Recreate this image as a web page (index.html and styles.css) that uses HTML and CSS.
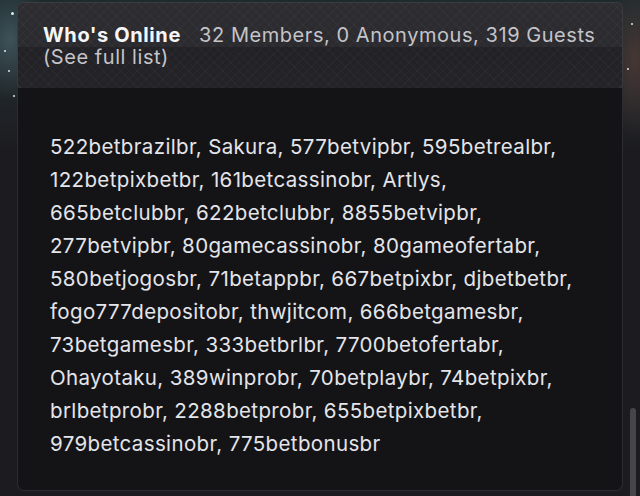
FILE: index.html
```html
<!DOCTYPE html>
<html lang="en">
<head>
    <meta charset="UTF-8">
    <meta name="viewport" content="width=device-width, initial-scale=1.0">
    <title>Who's Online</title>
    <link rel="stylesheet" href="styles.css">
</head>
<body>
    <div class="backdrop">
        <span class="star s1"></span>
        <span class="star s2"></span>
        <span class="star s3"></span>
        <span class="star s4"></span>
        <span class="star s5"></span>
        <span class="star s6"></span>
    </div>

    <div class="scrollbar"><div class="thumb"></div></div>

    <section class="online">
        <header class="online-head">
            <h3>Who's Online</h3>
            <span class="stats">32 Members, 0 Anonymous, 319 Guests</span>
            <a href="#" class="full-list">(See full list)</a>
        </header>
        <div class="online-body">
            <p class="members">522betbrazilbr, Sakura, 577betvipbr, 595betrealbr,<br>
            122betpixbetbr, 161betcassinobr, Artlys,<br>
            665betclubbr, 622betclubbr, 8855betvipbr,<br>
            277betvipbr, 80gamecassinobr, 80gameofertabr,<br>
            580betjogosbr, 71betappbr, 667betpixbr, djbetbetbr,<br>
            fogo777depositobr, thwjitcom, 666betgamesbr,<br>
            73betgamesbr, 333betbrlbr, 7700betofertabr,<br>
            Ohayotaku, 389winprobr, 70betplaybr, 74betpixbr,<br>
            brlbetprobr, 2288betprobr, 655betpixbetbr,<br>
            979betcassinobr, 775betbonusbr</p>
        </div>
    </section>
</body>
</html>
```

FILE: styles.css
```css
html, body {
    margin: 0;
    padding: 0;
}
body {
    width: 640px;
    height: 496px;
    overflow: hidden;
    position: relative;
    background-color: #1c1c20;
    font-family: Inter, "Noto Sans", sans-serif;
}
.backdrop {
    position: absolute;
    left: 0;
    top: 0;
    width: 640px;
    height: 150px;
    background:
        radial-gradient(ellipse 40px 60px at 10px 40px, rgba(120, 160, 170, 0.35), transparent),
        radial-gradient(ellipse 30px 80px at 635px 60px, rgba(110, 70, 60, 0.5), transparent),
        linear-gradient(to bottom, #1d2a2e 0%, #20262a 60%, #1c1c20 100%);
}
.star {
    position: absolute;
    width: 2px;
    height: 2px;
    border-radius: 50%;
    background: #dfe9ea;
}
.s1 { left: 11px; top: 12px; width: 3px; height: 3px; }
.s2 { left: 4px; top: 50px; }
.s3 { left: 8px; top: 70px; }
.s4 { left: 631px; top: 23px; }
.s5 { left: 627px; top: 68px; }
.s6 { left: 13px; top: 95px; }
.scrollbar {
    position: absolute;
    right: 4px;
    top: 0;
    width: 6px;
    height: 496px;
}
.thumb {
    position: absolute;
    left: 0;
    top: 408px;
    width: 6px;
    height: 100px;
    border-radius: 3px;
    background: #45454b;
}
.online {
    position: relative;
    margin: 2px 17px 0 17px;
    width: 606px;
}
.online-head {
    padding: 21px 20px 20px 25px;
    border: 1px solid #3c3b40;
    border-radius: 6px;
    font-size: 20px;
    line-height: 22px;
    letter-spacing: 0.55px;
    background:
        repeating-linear-gradient(45deg, rgba(255, 255, 255, 0.025) 0 1px, transparent 1px 6px),
        repeating-linear-gradient(-45deg, rgba(255, 255, 255, 0.025) 0 1px, transparent 1px 6px),
        linear-gradient(to bottom, #2d2c31 0, #2b2a2f 44px, #222125 44px, #242327 100%);
}
.online-head h3 {
    display: inline;
    margin: 0 12px 0 0;
    font-size: 20px;
    font-weight: 700;
    letter-spacing: 0.6px;
    color: #f6f6f8;
}
.stats {
    color: #c4c4c9;
}
.full-list {
    color: #c4c4c9;
    text-decoration: none;
}
.online-body {
    margin-top: -1px;
    padding: 42px 20px 28px 32px;
    height: 332px;
    background: #141417;
    border: 1px solid #2c2c31;
    border-top: none;
    border-radius: 0 0 7px 7px;
}
.members {
    margin: 0;
    font-size: 20.5px;
    line-height: 33px;
    letter-spacing: 0.36px;
    white-space: nowrap;
    color: #e4e5ea;
}
```
